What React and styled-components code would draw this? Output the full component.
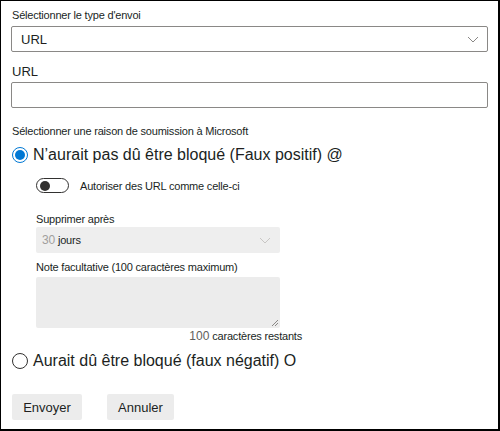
import React from 'react'
import styled, { createGlobalStyle } from 'styled-components'

const GlobalStyle = createGlobalStyle`
  html, body {
    margin: 0;
    padding: 0;
    background: #fff;
  }
  * {
    box-sizing: border-box;
  }
`

const Panel = styled('div')`
  width: 500px;
  height: 431px;
  border-style: solid;
  border-color: #000;
  border-width: 1px 2px 2px 1px;
  padding: 7px 10px 0 10px;
  font-family: 'Liberation Sans', Arial, sans-serif;
  color: #201f1e;
  display: flex;
  flex-direction: column;
`

const Label = styled('div')`
  font-size: 11px;
  line-height: 14px;
  letter-spacing: -0.2px;
  color: #201f1e;
  margin: ${p => p.$m || '0'};
`

const BigLabel = styled(Label)`
  font-size: 13px;
  letter-spacing: 0;
`

const SelectBox = styled('div')`
  height: 26px;
  width: ${p => p.$w || '477px'};
  border: ${p => (p.$disabled ? 'none' : '1px solid #8a8886')};
  border-radius: 2px;
  background: ${p => (p.$disabled ? '#eeeeee' : '#fff')};
  display: flex;
  align-items: center;
  justify-content: space-between;
  padding: 0 ${p => (p.$disabled ? '9px' : '8px')} 0 ${p => (p.$disabled ? '6px' : '9px')};
  font-size: ${p => (p.$disabled ? '11px' : '13px')};
  letter-spacing: ${p => (p.$disabled ? '-0.2px' : '0')};
`

const Muted = styled('span')`
  color: #a19f9d;
  font-size: 12px;
  margin-right: 3px;
`

const Input = styled('div')`
  height: 26px;
  width: 477px;
  border: 1px solid #8a8886;
  border-radius: 2px;
`

const RadioRow = styled('div')`
  display: flex;
  align-items: center;
  gap: 5px;
  font-size: 16px;
  line-height: 20px;
  color: #201f1e;
  margin: ${p => p.$m || '0'};
`

const RadioCircle = styled('span')`
  width: 16px;
  height: 16px;
  border-radius: 50%;
  border: 1px solid ${p => (p.$checked ? '#0078d4' : '#323130')};
  display: flex;
  align-items: center;
  justify-content: center;
  flex-shrink: 0;
  margin-left: 1px;

  &::after {
    content: '';
    display: ${p => (p.$checked ? 'block' : 'none')};
    width: 10px;
    height: 10px;
    border-radius: 50%;
    background: #0078d4;
  }
`

const Nested = styled('div')`
  padding-left: 25px;
  display: flex;
  flex-direction: column;
`

const ToggleRow = styled('div')`
  display: flex;
  align-items: center;
  gap: 11px;
  margin-top: 13px;
`

const Toggle = styled('span')`
  width: 33px;
  height: 15px;
  border: 1px solid #323130;
  border-radius: 8px;
  display: flex;
  align-items: center;
  padding-left: 3px;

  &::after {
    content: '';
    width: 10px;
    height: 10px;
    border-radius: 50%;
    background: #323130;
  }
`

const TextArea = styled('div')`
  width: 244px;
  height: 51px;
  background: #ececec;
  border-radius: 2px;
  position: relative;
`

const Grip = styled('svg')`
  position: absolute;
  right: 2px;
  bottom: 2px;
`

const Counter = styled('div')`
  width: 266px;
  text-align: right;
  margin-top: 1px;
  font-size: 11px;
  letter-spacing: -0.2px;
  line-height: 14px;

  span {
    color: #605e5c;
    font-size: 12px;
    letter-spacing: 0;
  }
`

const Buttons = styled('div')`
  display: flex;
  gap: 25px;
  margin-top: 23px;
  padding-left: 1px;
`

const Button = styled('button')`
  height: 26px;
  width: ${p => p.$w};
  border: none;
  border-radius: 2px;
  background: #ececec;
  font-family: 'Liberation Sans', Arial, sans-serif;
  font-size: 13px;
  color: #201f1e;
  padding: 0;
`

const Chevron = ({ color }) => (
  <svg width="12" height="7" viewBox="0 0 12 7">
    <path d="M1 1 L6 6 L11 1" fill="none" stroke={color} strokeWidth="1" />
  </svg>
)

export default function App() {
  return (
    <>
      <GlobalStyle />
      <Panel>
        <Label $m="0 0 4px 1px">Sélectionner le type d'envoi</Label>
        <SelectBox>
          URL
          <Chevron color="#8a8886" />
        </SelectBox>
        <BigLabel $m="13px 0 3px 1px">URL</BigLabel>
        <Input />
        <Label $m="16px 0 0 1px">Sélectionner une raison de soumission à Microsoft</Label>
        <RadioRow $m="7px 0 0 0">
          <RadioCircle $checked />
          N’aurait pas dû être bloqué (Faux positif) @
        </RadioRow>
        <Nested>
          <ToggleRow>
            <Toggle />
            <Label>Autoriser des URL comme celle-ci</Label>
          </ToggleRow>
          <Label $m="19px 0 1px 0">Supprimer après</Label>
          <SelectBox $disabled $w="244px">
            <span><Muted>30</Muted>jours</span>
            <Chevron color="#c8c6c4" />
          </SelectBox>
          <Label $m="7px 0 3px 0">Note facultative (100 caractères maximum)</Label>
          <TextArea>
            <Grip width="6" height="6" viewBox="0 0 6 6">
              <path d="M6 0 L0 6 M6 3 L3 6" stroke="#8a8886" strokeWidth="1" />
            </Grip>
          </TextArea>
          <Counter><span>100</span> caractères restants</Counter>
        </Nested>
        <RadioRow $m="8px 0 0 0">
          <RadioCircle />
          Aurait dû être bloqué (faux négatif) O
        </RadioRow>
        <Buttons>
          <Button $w="70px">Envoyer</Button>
          <Button $w="67px">Annuler</Button>
        </Buttons>
      </Panel>
    </>
  )
}
